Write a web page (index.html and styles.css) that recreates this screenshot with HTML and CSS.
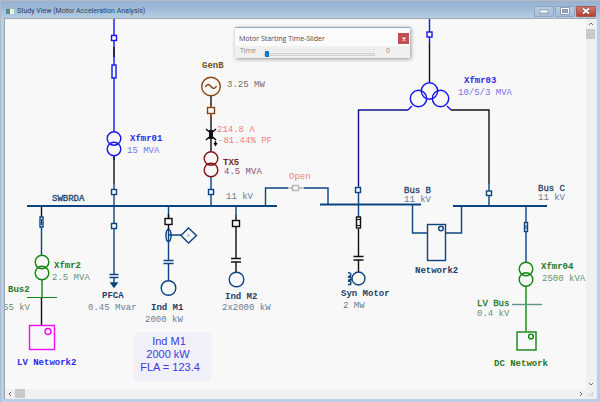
FILE: index.html
```html
<!DOCTYPE html>
<html lang="en">
<head>
<meta charset="utf-8">
<title>Study View (Motor Acceleration Analysis)</title>
<link rel="stylesheet" href="styles.css">
</head>
<body>
<main class="window">
  <header class="titlebar">
    <svg class="app-icon" viewBox="0 0 8 6" aria-hidden="true">
      <rect width="8" height="6" fill="#f4f6f2"/>
      <rect width="8" height="1" fill="#9fb0b8"/>
      <rect x="0" y="1" width="4" height="5" fill="#4f9482"/>
      <rect x="6" y="1" width="1" height="4" fill="#dfe3dc"/>
    </svg>
    <h1 class="title">Study View (Motor Acceleration Analysis)</h1>
    <div class="window-buttons">
      <button class="win-btn" type="button" aria-label="Minimize">
        <svg viewBox="0 0 10 8"><rect x="1" y="3" width="8" height="3" fill="#fff" stroke="#8794a6" stroke-width=".8"/></svg>
      </button>
      <button class="win-btn" type="button" aria-label="Maximize">
        <svg viewBox="0 0 10 8"><rect x="1.5" y="1.5" width="7" height="5" fill="#8fabc9" stroke="#6e7e92" stroke-width="2.4"/><rect x="1.5" y="1.5" width="7" height="5" fill="none" stroke="#fff" stroke-width="1.2"/></svg>
      </button>
      <button class="win-btn win-close" type="button" aria-label="Close">
        <svg viewBox="0 0 10 8"><path d="M2 1.5L8 6.5M8 1.5L2 6.5" stroke="#7c4a48" stroke-width="3.4"/><path d="M2 1.5L8 6.5M8 1.5L2 6.5" stroke="#fff" stroke-width="2"/></svg>
      </button>
    </div>
  </header>

  <div class="pane">
    <div class="canvas">
      <svg class="diagram" role="img" aria-label="One-line diagram">
        <g transform="translate(-5 -19)">
          <!-- Xfmr01 feeder -->
          <g class="blue">
            <path d="M114 19V35M114 41V65M114 78V131M114 156V160"/>
            <rect x="111.5" y="35.5" width="5" height="5"/>
            <rect x="112" y="65" width="4" height="13"/>
            <circle cx="114" cy="138.5" r="6.8"/>
            <circle cx="114" cy="149" r="6.8"/>
          </g>
          <path class="black" d="M114 47V57M114 157V184"/>
          <g class="navy">
            <path d="M114 184V189M114 195V223M114 229V274M114 277V284"/>
            <rect x="111.5" y="189.5" width="5" height="5"/>
            <rect x="111.5" y="223.5" width="5" height="5"/>
            <path d="M109.5 274.5H118.5M109.5 277.5H118.5"/>
            <path class="navy-fill" d="M111 283H117L114 287Z"/>
          </g>

          <!-- GenB feeder -->
          <path class="black" d="M211 95V106M211 115V151"/>
          <g class="brown">
            <circle cx="211" cy="86.5" r="9.3"/>
            <path d="M205.5 87C207 83.5 209 84 211 86.5S215 89.5 216.5 86"/>
            <path d="M211 103V107M211 114V119"/>
            <rect x="207.5" y="107.5" width="7" height="6"/>
          </g>
          <path class="black" d="M206 129Q211 135 216 129M206 140Q211 134 216 140M215.5 141V145"/>
          <path class="black heavy" d="M211 130V139"/>
          <path d="M213.5 143H217.5L215.5 146.5Z"/>
          <g class="maroon">
            <circle cx="211" cy="158.5" r="6.8"/>
            <circle cx="211" cy="170" r="6.8"/>
          </g>
          <path class="navy" d="M211 177V189M211 195V206"/>
          <rect class="navy" x="208.5" y="189.5" width="5" height="5"/>

          <!-- Main bus and tie -->
          <path class="navy bus" d="M27 206H277"/>
          <path class="navy" d="M265.5 206V188H288M304 188H328V204"/>
          <path class="grey" d="M288 188H292M299 188H304"/>
          <rect class="grey" x="292.5" y="185.5" width="6" height="5"/>
          <path class="navy bus" d="M320 204.5H421"/>
          <path class="navy bus" d="M453 206H547"/>

          <!-- Xfmr2 and LV Network2 -->
          <path class="black" d="M41.5 207V217M41.5 298V325"/>
          <path class="navy" d="M41.5 227V255"/>
          <rect class="navy" x="40" y="217" width="3" height="10"/>
          <path class="navy fine" d="M41.5 219V225"/>
          <g class="green">
            <circle cx="42" cy="262" r="6.8"/>
            <circle cx="42" cy="273" r="6.8"/>
            <path d="M42 280V298"/>
            <path class="fine" d="M27 297.5H57"/>
          </g>
          <g class="magenta">
            <rect x="29.5" y="325.5" width="25" height="24"/>
            <circle cx="48" cy="331.5" r="3"/>
          </g>

          <!-- Ind M1 -->
          <path class="navy" d="M168.5 206V218M168.5 228V260M168.5 264V281M168.5 235H181"/>
          <path class="black" d="M168.5 214V218M168.5 225V230"/>
          <rect class="black" x="165" y="218.5" width="7" height="6"/>
          <ellipse class="navy" cx="168.5" cy="235.5" rx="2.5" ry="6"/>
          <path class="navy" d="M163.5 260.5H173.5M163.5 263.5H173.5"/>
          <path class="navy" d="M181 235.5L188.5 228L196.5 235.5L188.5 243Z"/>
          <text class="relay" x="187" y="237">R</text>
          <circle class="navy" cx="168.5" cy="288" r="7.3"/>

          <!-- Ind M2 -->
          <path class="navy" d="M236 206V215"/>
          <path class="black" d="M236 215V220M236 227V258M236 262V272M231 258.5H241M231 262H241"/>
          <rect class="black" x="232.5" y="220.5" width="7" height="6"/>
          <circle class="navy" cx="236.5" cy="279.5" r="7.3"/>

          <!-- Xfmr03 -->
          <path class="blue" d="M429.5 19V32M429.5 37V43M412 106L408 110M447 106L451 110"/>
          <rect class="blue" x="427" y="32" width="5" height="5"/>
          <path class="black" d="M429.5 43V82M451 110H489V184"/>
          <path class="indigo" d="M408 110H358.5V186"/>
          <g class="blue">
            <circle cx="429.5" cy="91" r="8.2"/>
            <circle cx="418.5" cy="98.5" r="8.2"/>
            <circle cx="440.5" cy="98.5" r="8.2"/>
          </g>

          <!-- Syn Motor -->
          <g class="navy">
            <path d="M358.5 186V187M358.5 193V217M489 184V191M489 196V206"/>
            <rect x="355.5" y="187.5" width="5" height="5"/>
            <rect x="486.5" y="191" width="5" height="4.5"/>
          </g>
          <path class="black" d="M358.5 229V256M358.5 260V272M353.5 256.5H363.5M353.5 260H363.5"/>
          <rect class="black" x="356.5" y="217" width="4" height="11"/>
          <path class="black fine" d="M356.5 219.5H360.5M356.5 225.5H360.5"/>
          <circle class="navy" cx="358.5" cy="278.5" r="6.5"/>
          <path class="navy" d="M348 272.5Q352 273 350.5 276Q349 275.5 348.5 277Q352 277 351 280Q349 279 348.5 281Q352 281 350.5 284.5H348"/>

          <!-- Network2 -->
          <g class="navy">
            <path d="M412.5 205V233H427M446 233H461.5V206"/>
            <rect x="427.5" y="224.5" width="18" height="36"/>
            <circle cx="441" cy="228.5" r="2.3"/>
          </g>

          <!-- Xfmr04 and DC Network -->
          <path class="navy" d="M526 206V222M526 232V262"/>
          <rect class="navy" x="524.5" y="222.5" width="3" height="9"/>
          <path class="navy fine" d="M526 225V229"/>
          <g class="green">
            <circle cx="526" cy="269" r="6.8"/>
            <circle cx="526" cy="279.5" r="6.8"/>
            <path d="M526 286V331"/>
            <rect x="517" y="332" width="19" height="18"/>
            <circle cx="531" cy="336.5" r="2.4"/>
          </g>
          <path class="teal" d="M512 304.5H542"/>

          <!-- Labels -->
          <g class="label">
            <text class="t-blue bold" x="130" y="141">Xfmr01</text>
            <text class="t-violet" x="127" y="153">15 MVA</text>
            <text class="t-brown bold" x="202" y="68">GenB</text>
            <text class="t-tan" x="227" y="87">3.25 MW</text>
            <text class="t-red" x="217" y="132">214.8 A</text>
            <text class="t-red" x="218" y="143">-81.44% PF</text>
            <text class="t-maroon bold" x="223" y="165">TX5</text>
            <text class="t-rose" x="224" y="174">4.5 MVA</text>
            <text class="t-slate" x="226" y="199">11 kV</text>
            <text class="t-red" x="289" y="179">Open</text>
            <text class="t-navy mid" x="52" y="201">SWBRDA</text>
            <text class="t-green bold" x="54" y="268">Xfmr2</text>
            <text class="t-sage" x="52" y="280">2.5 MVA</text>
            <text class="t-green bold" x="8" y="292">Bus2</text>
            <text class="t-sage" x="3" y="310">55 kV</text>
            <text class="t-blue bold" x="17" y="365">LV Network2</text>
            <text class="t-navy bold" x="102" y="298">PFCA</text>
            <text class="t-slate" x="88" y="310">0.45 Mvar</text>
            <text class="t-navy bold" x="151" y="310">Ind M1</text>
            <text class="t-slate" x="145" y="322">2000 kW</text>
            <text class="t-navy bold" x="225" y="299">Ind M2</text>
            <text class="t-slate" x="222" y="310">2x2000 kW</text>
            <text class="t-blue bold" x="464" y="83">Xfmr03</text>
            <text class="t-violet" x="458" y="95">10/5/3 MVA</text>
            <text class="t-navy mid" x="404" y="193">Bus B</text>
            <text class="t-slate" x="404" y="202">11 kV</text>
            <text class="t-navy mid" x="538" y="191">Bus C</text>
            <text class="t-slate" x="538" y="200">11 kV</text>
            <text class="t-navy bold" x="415" y="273">Network2</text>
            <text class="t-navy bold" x="341" y="296">Syn Motor</text>
            <text class="t-slate" x="343" y="308">2 MW</text>
            <text class="t-green bold" x="541" y="269">Xfmr04</text>
            <text class="t-sage" x="542" y="281">2500 kVA</text>
            <text class="t-green mid" x="477" y="306">LV Bus</text>
            <text class="t-sage" x="477" y="316">0.4 kV</text>
            <text class="t-green bold" x="494" y="366">DC Network</text>
          </g>

          <!-- Motor callout -->
          <rect class="callout" x="134.5" y="333.5" width="76" height="47" rx="4"/>
          <g class="callout-text">
            <text x="169" y="345">Ind M1</text>
            <text x="168" y="358">2000 kW</text>
            <text x="170" y="371">FLA = 123.4</text>
          </g>
        </g>
      </svg>

      <section class="slider-panel">
        <header class="slider-head">
          <h2 class="slider-title">Motor Starting Time-Slider</h2>
          <button class="slider-close" type="button" aria-label="Close slider">
            <svg viewBox="0 0 4 4"><path d="M.5.5L3.5 3.5M3.5.5L.5 3.5" stroke="#fff" stroke-width="1.1"/></svg>
          </button>
        </header>
        <div class="slider-body">
          <label for="time">Time</label>
          <div class="track">
            <div class="ticks"></div>
            <input id="time" type="range" min="0" max="30" value="0">
          </div>
          <output for="time">0</output>
        </div>
      </section>
    </div>

    <div class="vbar">
      <button class="bar-btn" type="button" aria-label="Scroll up"><svg viewBox="0 0 6 6"><path d="M1 4L3 2L5 4"/></svg></button>
      <div class="thumb"></div>
      <button class="bar-btn end" type="button" aria-label="Scroll down"><svg viewBox="0 0 6 6"><path d="M1 2L3 4L5 2"/></svg></button>
    </div>
    <div class="hbar">
      <button class="bar-btn" type="button" aria-label="Scroll left"><svg viewBox="0 0 6 6"><path d="M4 1L2 3L4 5"/></svg></button>
      <div class="thumb"></div>
      <button class="bar-btn end" type="button" aria-label="Scroll right"><svg viewBox="0 0 6 6"><path d="M2 1L4 3L2 5"/></svg></button>
    </div>
    <svg class="grip" viewBox="0 0 9 11" aria-hidden="true"><path d="M6 3h1v1h-1zM6 5h1v1h-1zM4 5h1v1h-1zM6 7h1v1h-1zM4 7h1v1h-1zM2 7h1v1h-1z" fill="#b4b4b4"/></svg>
  </div>
</main>
</body>
</html>
```

FILE: styles.css
```css
* { box-sizing: border-box; }

body {
  margin: 0;
  background: #b9cfe7;
  font-family: "Open Sans", "Noto Sans", sans-serif;
}

button {
  margin: 0;
  padding: 0;
  border: 0;
  background: none;
}

.window {
  display: flex;
  flex-direction: column;
  height: 100vh;
  padding: 0 3px 3px 4px;
  border-top: 1px solid #b4b9bf;
  border-left: 1px solid #aebccb;
  background: #b9cfe7;
}

.titlebar {
  display: flex;
  flex: none;
  align-items: center;
  gap: 3px;
  height: 17px;
  margin: 0 -3px 0 -4px;
  padding: 3px 4px 0 5px;
  background: linear-gradient(#98b3d2, #9fbad8 45%, #b2c9e2 90%);
}

.app-icon { width: 8px; height: 6px; }

.title {
  flex: 1;
  margin: 0;
  color: #2c4460;
  font-family: Roboto, "Open Sans", sans-serif;
  font-size: 7px;
  font-weight: 400;
  line-height: 10px;
}

.window-buttons { display: flex; gap: 1px; }

.win-btn {
  display: grid;
  place-items: center;
  width: 20px;
  height: 11px;
  border: 1px solid #8ea6c2;
  border-radius: 1px;
  background: linear-gradient(#b9cde3, #a3bcd8);
}

.win-btn svg { width: 10px; height: 8px; }

.win-close {
  border-color: #a5584f;
  background: linear-gradient(#d3786a, #b8402f);
}

.pane {
  display: grid;
  flex: 1;
  grid-template: minmax(0, 1fr) 10px / minmax(0, 1fr) 10px;
  min-height: 0;
  border: 1px solid #a5a9ae;
  border-width: 1px 1px 0 0;
  border-right-color: #e4ebf4;
  background: #f0f0f0;
  box-shadow: -1px 0 #98a2ad;
}

.canvas {
  position: relative;
  overflow: hidden;
  background: #f8f8f8;
}

.diagram {
  display: block;
  width: 100%;
  height: 100%;
}

.diagram path,
.diagram rect,
.diagram circle,
.diagram ellipse { stroke-width: 1.4; }

.blue, .navy, .black, .brown, .maroon, .indigo, .green, .magenta, .grey, .teal { fill: none; }
.blue { stroke: #1414f4; }
.navy { stroke: #0c4482; }
.black { stroke: #101014; }
.brown { stroke: #8a4610; }
.maroon { stroke: #861016; }
.indigo { stroke: #10108c; }
.green { stroke: #108410; }
.magenta { stroke: #fa0afa; }
.grey { stroke: #b4b4b4; }
.teal { stroke: #5e9488; }
.navy-fill { fill: #0c4482; }
.diagram .bus { stroke-width: 2; }
.diagram .fine { stroke-width: 1; }
.diagram .heavy { stroke-width: 4; }

.label {
  font-family: "Liberation Mono", monospace;
  font-size: 9px;
}

.bold { font-weight: 700; }
.mid { stroke: currentColor; stroke-width: .3; }
.t-blue { fill: #2a2af0; }
.t-violet { fill: #7a70e4; }
.t-brown { fill: #705018; }
.t-tan { fill: #806858; }
.t-red { fill: #f47e76; }
.t-maroon { fill: #78282c; }
.t-rose { fill: #885058; }
.t-slate { fill: #6c7c94; }
.t-navy { fill: #24406c; color: #24406c; }
.t-green { fill: #207828; color: #207828; }
.t-sage { fill: #6c9070; }

.relay {
  fill: #70849c;
  font-family: "Liberation Sans", sans-serif;
  font-size: 4px;
}

.callout { fill: #f0f0fb; stroke: #f6ecf0; }

.callout-text {
  fill: #4038e0;
  font-family: "Liberation Sans", sans-serif;
  font-size: 11px;
  text-anchor: middle;
}

/* Floating time slider */
.slider-panel {
  position: absolute;
  top: 8px;
  left: 230px;
  width: 175px;
  border-top: 1px solid #8fa6c4;
  background: #f0f0f0;
  box-shadow: 1px 1px 4px rgba(0, 0, 0, .4);
}

.slider-head {
  display: flex;
  align-items: center;
  justify-content: space-between;
  height: 18px;
  padding: 3px 1px 0 4px;
  background: #fbfbfb;
}

.slider-title {
  margin: 0;
  color: #4a4a4a;
  font-size: 7px;
  font-weight: 400;
  line-height: 12px;
}

.slider-close {
  display: grid;
  place-items: center;
  width: 11px;
  height: 11px;
  background: #c2504e;
}

.slider-close svg { width: 4px; height: 4px; }

.slider-body {
  display: flex;
  gap: 8px;
  height: 12px;
  padding: 0 20px 0 5px;
  color: #8c8c8c;
  font-size: 7px;
  line-height: 10px;
}

.track { flex: 1; padding-top: 3px; }

.ticks {
  height: 1px;
  margin: 0 1px;
  background: repeating-linear-gradient(90deg, #c6c6c6 0 1px, transparent 1px 4px);
}

.track input {
  display: block;
  width: 100%;
  height: 7px;
  margin: 1px 0 0;
  appearance: none;
  background: none;
}

.track input::-webkit-slider-runnable-track {
  height: 3px;
  border: 1px solid #d2d2d2;
  background: #e9e9e9;
}

.track input::-webkit-slider-thumb {
  width: 4px;
  height: 6px;
  margin-top: -3px;
  appearance: none;
  background: #0a7ad4;
}

.slider-body output { padding-left: 3px; }

/* Scroll bars */
.vbar, .hbar {
  display: flex;
  background: #f0f0f0;
}

.vbar { flex-direction: column; }

.bar-btn {
  display: grid;
  flex: none;
  place-items: center;
  width: 10px;
  height: 10px;
}

.bar-btn svg { width: 6px; height: 6px; }
.bar-btn path { fill: none; stroke: #707070; stroke-width: 1; }
.end { margin-top: auto; }
.hbar .end { margin: 0 0 0 auto; }
.thumb { background: #c9c9c9; }
.vbar .thumb { width: 9px; height: 10px; }
.hbar .thumb { width: 10px; height: 9px; }
.grip { width: 9px; height: 10px; }
```
